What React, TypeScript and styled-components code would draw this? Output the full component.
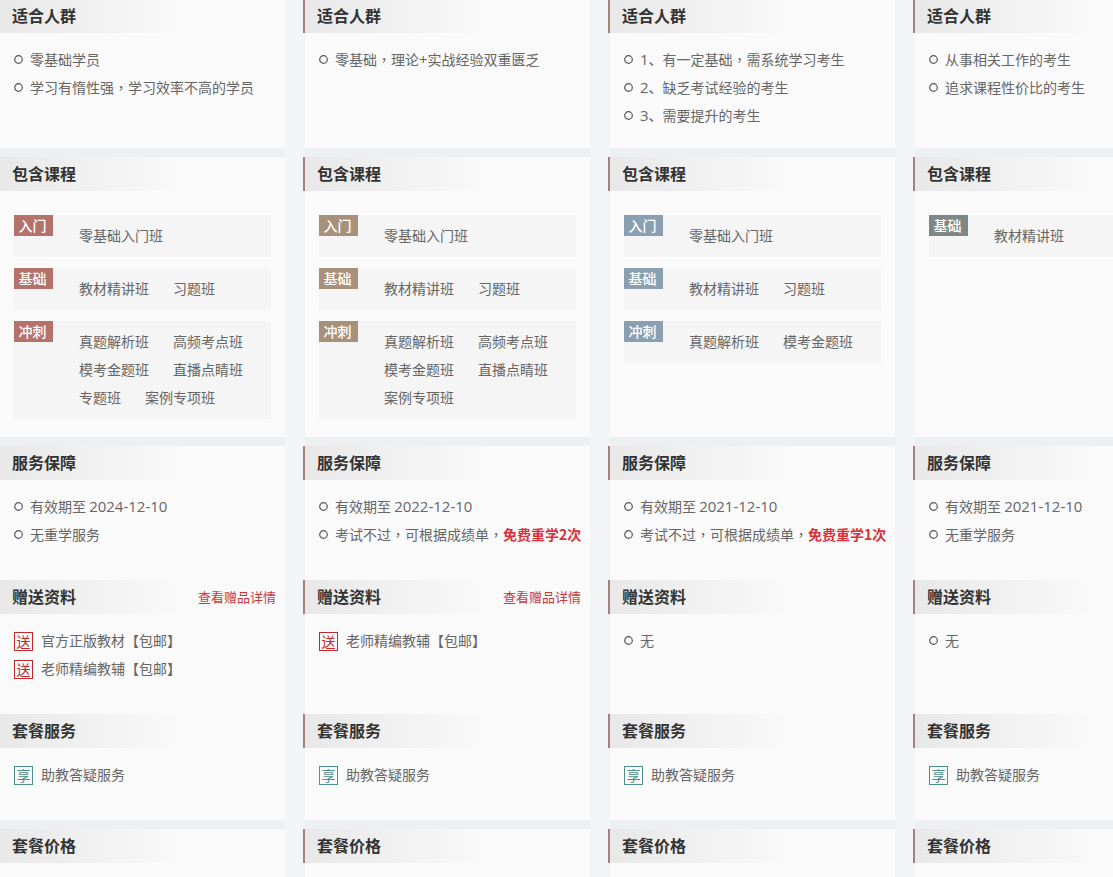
import { ReactNode } from 'react'
import styled, { createGlobalStyle } from 'styled-components'

const GlobalStyle = createGlobalStyle`
  html, body {
    margin: 0;
    padding: 0;
    background: #f3f4f6;
    font-family: "Noto Sans CJK SC", "Liberation Sans", sans-serif;
  }
`

interface Plan {
  accent: string
  audience: string[]
  tiers: { name: string; courses: string[] }[]
  expires: string
  retake: string
  retakeHighlight?: string
  gifts: string[]
  giftLink: boolean
}

const plans: Plan[] = [
  {
    accent: '#b5726b',
    audience: ['零基础学员', '学习有惰性强，学习效率不高的学员'],
    tiers: [
      { name: '入门', courses: ['零基础入门班'] },
      { name: '基础', courses: ['教材精讲班', '习题班'] },
      { name: '冲刺', courses: ['真题解析班', '高频考点班', '模考金题班', '直播点睛班', '专题班', '案例专项班'] },
    ],
    expires: '有效期至 2024-12-10',
    retake: '无重学服务',
    gifts: ['官方正版教材【包邮】', '老师精编教辅【包邮】'],
    giftLink: true,
  },
  {
    accent: '#a8917a',
    audience: ['零基础，理论+实战经验双重匮乏'],
    tiers: [
      { name: '入门', courses: ['零基础入门班'] },
      { name: '基础', courses: ['教材精讲班', '习题班'] },
      { name: '冲刺', courses: ['真题解析班', '高频考点班', '模考金题班', '直播点睛班', '案例专项班'] },
    ],
    expires: '有效期至 2022-12-10',
    retake: '考试不过，可根据成绩单，',
    retakeHighlight: '免费重学2次',
    gifts: ['老师精编教辅【包邮】'],
    giftLink: true,
  },
  {
    accent: '#8a9fb1',
    audience: ['1、有一定基础，需系统学习考生', '2、缺乏考试经验的考生', '3、需要提升的考生'],
    tiers: [
      { name: '入门', courses: ['零基础入门班'] },
      { name: '基础', courses: ['教材精讲班', '习题班'] },
      { name: '冲刺', courses: ['真题解析班', '模考金题班'] },
    ],
    expires: '有效期至 2021-12-10',
    retake: '考试不过，可根据成绩单，',
    retakeHighlight: '免费重学1次',
    gifts: [],
    giftLink: false,
  },
  {
    accent: '#7d8785',
    audience: ['从事相关工作的考生', '追求课程性价比的考生'],
    tiers: [{ name: '基础', courses: ['教材精讲班'] }],
    expires: '有效期至 2021-12-10',
    retake: '无重学服务',
    gifts: [],
    giftLink: false,
  },
]

// digits and commas use other faces than the rest of the line
const formatText = (text: string): ReactNode =>
  text.split(/([0-9+-]+|，)/).map((part, i) => {
    if (part === '，') return <Comma key={i}>{part}</Comma>
    if (/^[0-9+-]+$/.test(part)) return <Num key={i}>{part}</Num>
    return part
  })

const Bullet = () => (
  <BulletIcon viewBox="0 0 9 9">
    <circle cx="4.5" cy="4.5" r="3.8" fill="none" stroke="#555" strokeWidth="1.2" />
  </BulletIcon>
)

const App = () => {
  return (
    <Page>
      <GlobalStyle />
      <Table>
        {plans.map((plan, i) => (
          <Card key={i}>
            <SectionTitle>适合人群</SectionTitle>
            <List>
              {plan.audience.map(text => (
                <Item key={text}>
                  <Bullet />
                  <span>{formatText(text)}</span>
                </Item>
              ))}
            </List>
          </Card>
        ))}

        {plans.map((plan, i) => (
          <Card key={i}>
            <SectionTitle>包含课程</SectionTitle>
            <Tiers>
              {plan.tiers.map(tier => (
                <Tier key={tier.name}>
                  <TierTag $color={plan.accent}>{tier.name}</TierTag>
                  <Courses>
                    {tier.courses.map(course => (
                      <Course key={course}>{course}</Course>
                    ))}
                  </Courses>
                </Tier>
              ))}
            </Tiers>
          </Card>
        ))}

        {plans.map((plan, i) => (
          <Card key={i}>
            <SectionTitle>服务保障</SectionTitle>
            <List $height={100}>
              <Item>
                <Bullet />
                <span>{formatText(plan.expires)}</span>
              </Item>
              <Item>
                <Bullet />
                <span>
                  {formatText(plan.retake)}
                  {plan.retakeHighlight && <Highlight>{plan.retakeHighlight}</Highlight>}
                </span>
              </Item>
            </List>

            <SectionTitle>
              赠送资料
              {plan.giftLink && <GiftLink>查看赠品详情</GiftLink>}
            </SectionTitle>
            <List $height={100}>
              {plan.gifts.length === 0 && (
                <Item>
                  <Bullet />无
                </Item>
              )}
              {plan.gifts.map(gift => (
                <Item key={gift} $gap={8}>
                  <Badge $color="#c0282e">送</Badge>
                  {gift}
                </Item>
              ))}
            </List>

            <SectionTitle>套餐服务</SectionTitle>
            <List $height={72}>
              <Item $gap={8}>
                <Badge $color="#4f8f8c">享</Badge>
                助教答疑服务
              </Item>
            </List>
          </Card>
        ))}

        {plans.map((_, i) => (
          <Card key={i}>
            <SectionTitle>套餐价格</SectionTitle>
            <List $height={72} />
          </Card>
        ))}
      </Table>
    </Page>
  )
}

export default App

const Page = styled.div`
  height: 100vh;
  overflow: hidden;
`

const Table = styled.div`
  display: grid;
  grid-template-columns: repeat(4, 285px);
  column-gap: 20px;
  row-gap: 9px;
  margin-top: -1px;
  width: 1200px;
`

const Card = styled.div`
  background: #fafafa;
  box-shadow: 0 9px 0 0 #eeeff1;
`

const SectionTitle = styled.div`
  position: relative;
  box-sizing: border-box;
  display: flex;
  align-items: center;
  justify-content: space-between;
  height: 34px;
  padding: 0 9px 2px 12px;
  background: linear-gradient(to right, #e8e8e8, #fafafa 65%);
  color: #333;
  font-size: 16px;
  font-weight: 700;

  &::before {
    content: '';
    position: absolute;
    left: -2px;
    top: 0;
    bottom: 0;
    width: 2px;
    background: #a8807b;
  }
`

const GiftLink = styled.span`
  color: #c9393c;
  font-size: 13px;
  font-weight: 400;
`

const List = styled.div<{ $height?: number }>`
  box-sizing: border-box;
  min-height: ${p => (p.$height ? `${p.$height}px` : '0')};
  padding: 13px 0 18px 14px;
`

const Item = styled.div<{ $gap?: number }>`
  box-sizing: border-box;
  display: flex;
  align-items: center;
  gap: ${p => p.$gap ?? 7}px;
  height: 28px;
  padding-bottom: 2px;
  color: #666;
  font-size: 14px;
  white-space: nowrap;
`

const Num = styled.span`
  font-family: "Open Sans", sans-serif;
  font-size: 15px;
`

const Comma = styled.span`
  font-family: "Noto Sans CJK TC", sans-serif;
`

const BulletIcon = styled.svg`
  flex: none;
  width: 9px;
  height: 9px;
`

const Highlight = styled.b`
  color: #d9303a;
  font-weight: 700;
`

const Badge = styled.span<{ $color: string }>`
  flex: none;
  box-sizing: border-box;
  display: flex;
  align-items: center;
  justify-content: center;
  width: 19px;
  height: 19px;
  margin-top: 2px;
  border: 1px solid ${p => p.$color};
  color: ${p => p.$color};
  font-size: 14px;
`

const Tiers = styled.div`
  display: flex;
  flex-direction: column;
  gap: 11px;
  padding: 24px 14px 18px;
`

const Tier = styled.div`
  display: flex;
  align-items: flex-start;
  background: #f5f5f5;
`

const TierTag = styled.span<{ $color: string }>`
  flex: none;
  box-sizing: border-box;
  display: flex;
  align-items: center;
  justify-content: center;
  width: 39px;
  height: 21px;
  padding: 0 2px 2px 0;
  background: ${p => p.$color};
  color: #fff;
  font-size: 14px;
  font-weight: 500;
`

const Courses = styled.div`
  display: flex;
  flex-wrap: wrap;
  flex: 1;
  padding: 6px 0 8px 26px;
`

const Course = styled.span`
  height: 28px;
  line-height: 28px;
  margin-right: 24px;
  color: #666;
  font-size: 14px;
  white-space: nowrap;
`
